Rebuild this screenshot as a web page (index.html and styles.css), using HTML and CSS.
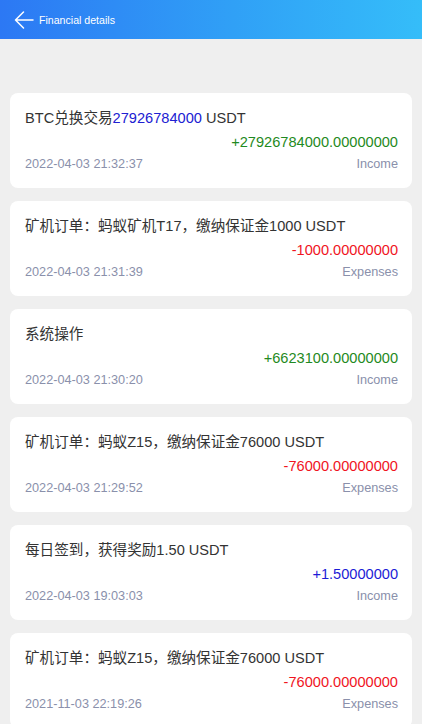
FILE: index.html
```html
<!DOCTYPE html>
<html lang="zh-CN">
<head>
<meta charset="utf-8">
<title>Financial details</title>
<link rel="stylesheet" href="styles.css">
</head>
<body>
<header class="topbar">
  <svg class="back" width="20" height="18" viewBox="0 0 20 18" aria-hidden="true">
    <path d="M19 9 H1.5 M9.5 1 L1.5 9 L9.5 17" fill="none" stroke="#fff" stroke-width="1.5" stroke-linecap="round" stroke-linejoin="round"/>
  </svg>
  <span class="topbar-title">Financial details</span>
</header>
<main class="list">
  <section class="card">
    <div class="title">BTC兑换交易<span class="hl">27926784000</span> USDT</div>
    <div class="amount plus">+27926784000.00000000</div>
    <div class="meta"><span>2022-04-03 21:32:37</span><span>Income</span></div>
  </section>
  <section class="card">
    <div class="title">矿机订单：蚂蚁矿机T17，缴纳保证金1000 USDT</div>
    <div class="amount minus">-1000.00000000</div>
    <div class="meta"><span>2022-04-03 21:31:39</span><span>Expenses</span></div>
  </section>
  <section class="card">
    <div class="title">系统操作</div>
    <div class="amount plus">+6623100.00000000</div>
    <div class="meta"><span>2022-04-03 21:30:20</span><span>Income</span></div>
  </section>
  <section class="card">
    <div class="title">矿机订单：蚂蚁Z15，缴纳保证金76000 USDT</div>
    <div class="amount minus">-76000.00000000</div>
    <div class="meta"><span>2022-04-03 21:29:52</span><span>Expenses</span></div>
  </section>
  <section class="card">
    <div class="title">每日签到，获得奖励1.50 USDT</div>
    <div class="amount blue">+1.50000000</div>
    <div class="meta"><span>2022-04-03 19:03:03</span><span>Income</span></div>
  </section>
  <section class="card">
    <div class="title">矿机订单：蚂蚁Z15，缴纳保证金76000 USDT</div>
    <div class="amount minus">-76000.00000000</div>
    <div class="meta"><span>2021-11-03 22:19:26</span><span>Expenses</span></div>
  </section>
</main>
</body>
</html>
```
FILE: styles.css
```css
* { box-sizing: border-box; }
html, body {
  margin: 0;
  padding: 0;
  background: #efefef;
  font-family: "Liberation Sans", "Noto Sans CJK SC", sans-serif;
}
body { height: 724px; overflow: hidden; }
.topbar {
  height: 39px;
  display: flex;
  align-items: center;
  gap: 5px;
  padding-left: 14px;
  background: linear-gradient(90deg, #2c78f4 0%, #30a0f6 55%, #35bdf9 100%);
  color: #fff;
}
.back { display: block; }
.topbar-title { font-size: 10.6px; line-height: 14px; }
.list {
  display: flex;
  flex-direction: column;
  gap: 13px;
  padding: 54px 10px 0 10px;
}
.card {
  background: #fff;
  border-radius: 8px;
  padding: 15px 14px 13px 15px;
}
.title {
  font-size: 14.6px;
  line-height: 20px;
  color: #333;
  white-space: nowrap;
}
.hl { color: #2020d2; }
.amount {
  margin-top: 3px;
  font-size: 14.6px;
  line-height: 22px;
  text-align: right;
}
.plus { color: #1f8a22; }
.minus { color: #f0141e; }
.blue { color: #1c1cd6; }
.meta {
  display: flex;
  justify-content: space-between;
  font-size: 12.7px;
  line-height: 22px;
  color: #8a90ab;
}
```
